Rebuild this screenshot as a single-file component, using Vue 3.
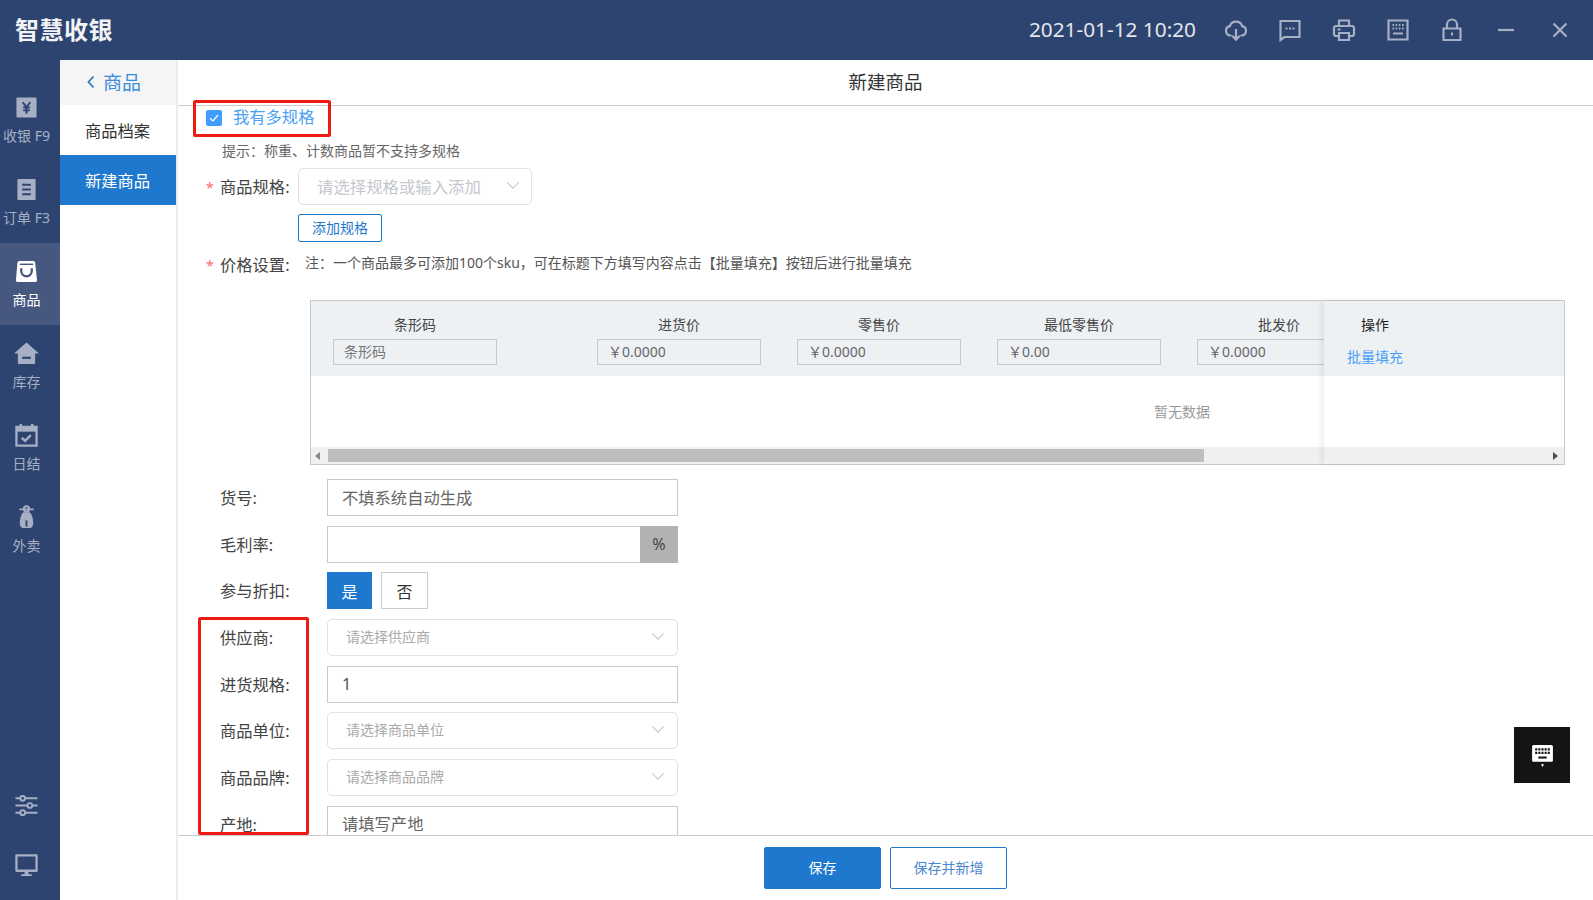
<template>
  <div class="shell">
    <header class="topbar">
      <div class="logo">智慧收银</div>
      <div class="top-right">
        <span class="clock">2021-01-12 10:20</span>
        <div class="top-icons">
          <svg viewBox="0 0 24 24"><path d="M7.500 17.500H6.500a4.700 4.700 0 0 1-.7-9.300A6.500 6.500 0 0 1 18.200 8.200a4.700 4.700 0 0 1-.7 9.300h-1" /><path d="M12 11v10.500M8.200 17.800 12 21.600l3.800-3.800" /></svg>
          <svg viewBox="0 0 24 24"><path d="M2.500 3h19v16H6.500l-4 3z" /><path d="M7.500 10.500h2M11 10.500h2M14.500 10.500h2" /></svg>
          <svg viewBox="0 0 24 24"><path d="M7 8V2.500h10V8" /><path d="M7 18H4a2 2 0 0 1-2-2V10a2 2 0 0 1 2-2h16a2 2 0 0 1 2 2v6a2 2 0 0 1-2 2h-3" /><path d="M7 15h10v7H7zM5.500 11.500h3" /></svg>
          <svg viewBox="0 0 24 24"><path d="M2.500 2.500h19v19h-19z" /><path d="M6.500 7h1.600M9.600 7h1.600M12.800 7h1.600M16 7h1.600M6.500 10.500h1.600M9.600 10.500h1.600M12.800 10.500h1.600M16 10.500h1.600M7 15.500h10" /></svg>
          <svg viewBox="0 0 24 24"><path d="M3.500 10.500h17v11.500h-17z" /><path d="M7 10.500V6.500a5 5 0 0 1 10 0v4M12 14.500v3" /></svg>
          <svg viewBox="0 0 24 24"><path d="M4 12h16" /></svg>
          <svg viewBox="0 0 24 24"><path d="M5.500 5.500l13 13M18.500 5.500l-13 13" /></svg>
        </div>
      </div>
    </header>

    <div class="layout">
      <aside class="sidebar">
        <div class="side-list">
          <div v-for="item in sideItems" :key="item.label" class="side-item" :class="{ active: item.active }">
            <svg viewBox="0 0 24 24" class="side-icon" v-html="item.icon"></svg>
            <span>{{ item.label }}</span>
          </div>
        </div>
        <div class="side-bottom">
          <svg viewBox="0 0 24 24" class="side-icon">
            <path d="M0.500 4.500h23M0.500 12h23M0.500 19.500h23" stroke="#a6afc4" stroke-width="2.200" fill="none" />
            <circle cx="8" cy="4.500" r="2.500" fill="#2d4470" stroke="#a6afc4" stroke-width="2" />
            <circle cx="15.500" cy="12" r="2.500" fill="#2d4470" stroke="#a6afc4" stroke-width="2" />
            <circle cx="8" cy="19.500" r="2.500" fill="#2d4470" stroke="#a6afc4" stroke-width="2" />
          </svg>
          <svg viewBox="0 0 24 24" class="side-icon">
            <path d="M1.500 1.500h21v16h-21z" fill="none" stroke="#a6afc4" stroke-width="2.400" stroke-linejoin="round" />
            <path d="M10 18.500h4v3h-4zM6.500 21h11v2h-11z" fill="#a6afc4" />
          </svg>
        </div>
      </aside>

      <nav class="subnav">
        <div class="sub-back">
          <svg viewBox="0 0 10 14" class="back-arrow"><path d="M7.500 1.500 2.500 7l5 5.500" /></svg>
          商品
        </div>
        <div class="sub-item">商品档案</div>
        <div class="sub-item current">新建商品</div>
      </nav>

      <main class="main">
        <div class="title">新建商品</div>
        <div class="form-area">
          <div class="multi-row">
            <span class="check-box" :class="{ off: !multiSpec }" @click="multiSpec = !multiSpec">
              <svg viewBox="0 0 16 16"><path d="M4 8.200 7 11l5-6" /></svg>
            </span>
            <span class="multi-label">我有多规格</span>
          </div>
          <div class="hint">提示：称重、计数商品暂不支持多规格</div>

          <div class="spec-row">
            <label class="field-label short"><i>*</i>商品规格:</label>
            <div class="select big">
              <span>请选择规格或输入添加</span>
              <svg viewBox="0 0 16 10" class="chev"><path d="M1.500 1.500 8 8l6.500-6.500" /></svg>
            </div>
          </div>
          <button class="add-btn">添加规格</button>

          <div class="price-row">
            <label class="field-label short"><i>*</i>价格设置:</label>
            <span class="price-note">注：一个商品最多可添加100个sku，可在标题下方填写内容点击【批量填充】按钮后进行批量填充</span>
          </div>

          <div class="table">
            <div class="table-view">
              <div class="track">
                <div class="thead">
                  <div v-for="col in columns" :key="col.title" class="col" :class="{ first: col.first }">
                    <div class="col-title">{{ col.title }}</div>
                    <input class="col-input" :class="{ 'has-holder': col.first }" :value="col.value" :placeholder="col.holder" />
                  </div>
                </div>
                <div class="empty">暂无数据</div>
              </div>
            </div>
            <div class="scrollbar">
              <span class="arrow left"></span>
              <span class="thumb"></span>
            </div>
            <div class="fixed-col">
              <div class="fixed-head">
                <div class="op-title">操作</div>
                <a class="op-link">批量填充</a>
              </div>
              <div class="fixed-body"></div>
              <div class="fixed-bar">
                <span class="arrow right"></span>
              </div>
            </div>
          </div>

          <div class="rows">
            <div class="row">
              <label class="field-label">货号:</label>
              <input class="text-input" placeholder="不填系统自动生成" />
            </div>
            <div class="row">
              <label class="field-label">毛利率:</label>
              <div class="group">
                <input class="text-input flat" />
                <span class="addon">%</span>
              </div>
            </div>
            <div class="row">
              <label class="field-label">参与折扣:</label>
              <button class="toggle" :class="{ on: discount }" @click="discount = true">是</button>
              <button class="toggle second" :class="{ on: !discount }" @click="discount = false">否</button>
            </div>
            <div class="row">
              <label class="field-label">供应商:</label>
              <div class="select">
                <span>请选择供应商</span>
                <svg viewBox="0 0 16 10" class="chev"><path d="M1.500 1.500 8 8l6.500-6.500" /></svg>
              </div>
            </div>
            <div class="row">
              <label class="field-label">进货规格:</label>
              <input class="text-input" value="1" />
            </div>
            <div class="row">
              <label class="field-label">商品单位:</label>
              <div class="select">
                <span>请选择商品单位</span>
                <svg viewBox="0 0 16 10" class="chev"><path d="M1.500 1.500 8 8l6.500-6.500" /></svg>
              </div>
            </div>
            <div class="row">
              <label class="field-label">商品品牌:</label>
              <div class="select">
                <span>请选择商品品牌</span>
                <svg viewBox="0 0 16 10" class="chev"><path d="M1.500 1.500 8 8l6.500-6.500" /></svg>
              </div>
            </div>
            <div class="row">
              <label class="field-label">产地:</label>
              <input class="text-input" placeholder="请填写产地" />
            </div>
          </div>
        </div>
        <footer class="footer">
          <button class="btn primary">保存</button>
          <button class="btn ghost">保存并新增</button>
        </footer>
      </main>
    </div>

    <!-- red marks drawn on top of the screenshot -->
    <div class="mark mark-a"></div>
    <div class="mark mark-b"></div>

    <div class="kb-float">
      <svg viewBox="0 0 24 24">
        <path d="M2 2.500a1.500 1.500 0 0 1 1.500-1.500h17A1.500 1.500 0 0 1 22 2.500v13a1.500 1.500 0 0 1-1.500 1.500h-17A1.500 1.500 0 0 1 2 15.500z" fill="#fff" />
        <path d="M5 5.200h14M5 8.500h14" stroke="#141414" stroke-width="2.200" stroke-dasharray="2 1" fill="none" />
        <path d="M8 13h8" stroke="#141414" stroke-width="2" fill="none" />
        <path d="M10.500 19.500h3L12 22z" fill="#fff" />
      </svg>
    </div>
  </div>
</template>

<script setup>
import { ref } from 'vue'

const multiSpec = ref(true)
const discount = ref(true)

const sideItems = [
  {
    label: '收银 F9',
    icon: '<path d="M1.500 2.500a1 1 0 0 1 1-1h19a1 1 0 0 1 1 1v19a1 1 0 0 1-1 1h-19a1 1 0 0 1-1-1z" fill="#a6afc4"/><path d="M8 6.500l4 5 4-5M12 11.500v7M8.500 12h7M8.500 15h7" stroke="#2d4470" stroke-width="2" fill="none"/>'
  },
  {
    label: '订单 F3',
    icon: '<path d="M2.500 2a1 1 0 0 1 1-1h17a1 1 0 0 1 1 1v20a1 1 0 0 1-1 1h-17a1 1 0 0 1-1-1z" fill="#a6afc4"/><path d="M7.500 7h9M7.500 12h9M7.500 17h9" stroke="#2d4470" stroke-width="2" fill="none"/>'
  },
  {
    label: '商品',
    active: true,
    icon: '<path d="M5 1h14a2 2 0 0 1 2 1.500L23 21a2 2 0 0 1-2 2H3a2 2 0 0 1-2-2L2.500 3A2.500 2.500 0 0 1 5 1z" fill="#fff"/><path d="M5 4.500h14" stroke="#475880" stroke-width="1.500"/><path d="M6.500 8.500v3a5.500 5.500 0 0 0 11 0v-3" stroke="#475880" stroke-width="2.400" fill="none"/>'
  },
  {
    label: '库存',
    icon: '<path d="M12 .5 25 12h-4v10a1 1 0 0 1-1 1H4a1 1 0 0 1-1-1V12H-1z" fill="#a6afc4"/><path d="M7.500 16.500h9" stroke="#2d4470" stroke-width="2.200"/>'
  },
  {
    label: '日结',
    icon: '<path d="M6 0v3M18 0v3" stroke="#a6afc4" stroke-width="2.600"/><path d="M1.500 3h21v19.500h-21z" fill="none" stroke="#a6afc4" stroke-width="2.400"/><path d="M1.500 3h21v5h-21z" fill="#a6afc4"/><path d="M7 14.500l3.500 3 6-6" stroke="#a6afc4" stroke-width="2.600" fill="none"/>'
  },
  {
    label: '外卖',
    icon: '<circle cx="12" cy="3" r="2.800" fill="none" stroke="#a6afc4" stroke-width="2"/><path d="M4.500 3.500h15" stroke="#a6afc4" stroke-width="1.800"/><path d="M8.500 6.500h7c2.500 3 3.500 7 3.500 11.500 0 3-1.500 5-3.500 5h-7C6.500 23 5 21 5 18c0-4.500 1-8.500 3.500-11.500z" fill="#a6afc4"/><path d="M12 15v6.500" stroke="#2d4470" stroke-width="2"/>'
  }
]

const columns = [
  { title: '条形码', holder: '条形码', first: true },
  { title: '进货价', value: '￥0.0000' },
  { title: '零售价', value: '￥0.0000' },
  { title: '最低零售价', value: '￥0.00' },
  { title: '批发价', value: '￥0.0000' }
]
</script>

<style>
html, body {
  margin: 0;
  height: 100%;
  background: #fff;
}
</style>

<style scoped>
* {
  box-sizing: border-box;
}

.shell {
  position: relative;
  width: 1593px;
  height: 900px;
  display: flex;
  flex-direction: column;
  overflow: hidden;
  font-family: "Noto Sans", "Noto Sans CJK SC", sans-serif;
  color: #444;
}

.topbar {
  height: 60px;
  flex-shrink: 0;
  background: #2d4470;
  display: flex;
  justify-content: space-between;
  align-items: center;
  padding: 0 21px 0 15px;
}

.logo {
  padding-bottom: 3px;
  font-size: 24px;
  font-weight: 700;
  letter-spacing: 0.5px;
  color: #f2f3f6;
}

.top-right {
  display: flex;
  align-items: center;
}

.clock {
  padding-bottom: 2px;
  font-size: 20.800px;
  color: #e3e6ec;
  margin-right: 28px;
}

.top-icons {
  display: flex;
  gap: 30px;
}

.top-icons svg {
  width: 24px;
  height: 24px;
  fill: none;
  stroke: #a6afc4;
  stroke-width: 2.200;
  overflow: visible;
}

.layout {
  flex: 1;
  display: flex;
  min-height: 0;
}

.sidebar {
  width: 60px;
  flex-shrink: 0;
  background: #2d4470;
  display: flex;
  flex-direction: column;
  justify-content: space-between;
  padding: 19px 0 18px;
}

.side-item {
  height: 82px;
  display: flex;
  flex-direction: column;
  align-items: center;
  padding: 17px 7px 0 0;
  font-size: 14px;
  line-height: 20px;
  white-space: nowrap;
  color: #a6afc4;
}

.side-item.active {
  background: #475880;
  color: #fff;
}

.side-icon {
  width: 23px;
  height: 23px;
  margin-bottom: 7px;
  overflow: visible;
  flex-shrink: 0;
}

.side-bottom {
  display: flex;
  flex-direction: column;
  align-items: center;
  gap: 30px;
  padding-right: 7px;
}

.side-bottom .side-icon:last-child {
  margin-bottom: 5px;
}

.subnav {
  width: 118px;
  flex-shrink: 0;
  border-right: 2px solid #ececec;
  font-size: 16.300px;
}

.sub-back {
  height: 45px;
  background: #f5f5f5;
  display: flex;
  align-items: center;
  padding: 0 0 1px 26px;
  font-size: 19px;
  color: #3a8ddb;
}

.back-arrow {
  width: 10px;
  height: 14px;
  margin-right: 7px;
  fill: none;
  stroke: #2f77c0;
  stroke-width: 1.800;
}

.sub-item {
  height: 50px;
  display: flex;
  align-items: center;
  padding: 0 0 1px 25px;
  color: #333;
}

.sub-item.current {
  width: 116px;
  background: #1e78cd;
  color: #fff;
}

.main {
  flex: 1;
  min-width: 0;
  display: flex;
  flex-direction: column;
}

.title {
  height: 46px;
  flex-shrink: 0;
  display: flex;
  align-items: center;
  justify-content: center;
  padding-bottom: 3px;
  font-size: 18.500px;
  color: #333;
  border-bottom: 1px solid #ccc;
}

.form-area {
  flex: 1;
  min-height: 0;
  overflow: hidden;
  padding-left: 28px;
}

.multi-row {
  height: 24px;
  display: flex;
  align-items: center;
}

.check-box {
  width: 16px;
  height: 16px;
  border-radius: 2px;
  background: #409eff;
  display: flex;
  cursor: pointer;
}

.check-box.off {
  background: #fff;
  border: 1px solid #ccc;
}

.check-box svg {
  fill: none;
  stroke: #fff;
  stroke-width: 1.200;
}

.multi-label {
  margin-left: 11px;
  padding-bottom: 5px;
  font-size: 16.300px;
  color: #4aa0f5;
}

.hint {
  margin: 10px 0 0 16px;
  padding-bottom: 1px;
  font-size: 14px;
  line-height: 22px;
  color: #666;
}

.spec-row {
  display: flex;
  align-items: center;
  margin-top: 5px;
}

.field-label {
  width: 107px;
  margin-left: 14px;
  padding-bottom: 1px;
  flex-shrink: 0;
  font-size: 16.300px;
  color: #444;
}

.field-label.short {
  width: 78px;
}

.field-label i {
  display: inline-block;
  width: 14px;
  margin-left: -14px;
  font-style: normal;
  font-size: 14px;
  color: #f56c6c;
}

.select {
  width: 351px;
  height: 37px;
  border: 1px solid #e0e2e8;
  border-radius: 5px;
  display: flex;
  align-items: center;
  justify-content: space-between;
  padding: 0 12px 3px 18px;
  font-size: 14px;
  color: #aaa;
}

.select.big {
  width: 234px;
  height: 37px;
  padding: 0 11px 2px 18px;
  font-size: 16.400px;
  color: #c4c7ce;
}

.chev {
  width: 14px;
  height: 9px;
  fill: none;
  stroke: #c4c8d2;
  stroke-width: 1.300;
}

.add-btn {
  display: block;
  width: 84px;
  height: 28px;
  margin: 9px 0 0 92px;
  padding: 0 0 2px;
  background: #fff;
  border: 1px solid #1e78cd;
  border-radius: 2px;
  font: inherit;
  font-size: 14px;
  color: #1e78cd;
}

.price-row {
  height: 24px;
  margin-top: 10px;
  display: flex;
  align-items: center;
}

.price-note {
  margin-left: 7px;
  padding-bottom: 4px;
  font-size: 14px;
  color: #555;
}

.table {
  position: relative;
  width: 1255px;
  height: 165px;
  margin: 24px 0 14px 104px;
  border: 1px solid #c9c9c9;
  display: flex;
  flex-direction: column;
}

.table-view {
  flex: 1;
  min-height: 0;
  overflow: hidden;
}

.track {
  width: 1742px;
}

.thead {
  height: 75px;
  background: #eef1f4;
  display: flex;
  padding: 13px 0 0 22px;
}

.col {
  width: 164px;
  margin-right: 36px;
  flex-shrink: 0;
}

.col.first {
  margin-right: 100px;
}

.col-title {
  height: 21px;
  font-size: 14px;
  line-height: 21px;
  text-align: center;
  color: #444;
}

.col-input {
  display: block;
  width: 164px;
  height: 26px;
  margin-top: 4px;
  padding: 0 10px 2px;
  background: transparent;
  border: 1px solid #c9c9c9;
  outline: none;
  font: inherit;
  font-size: 14px;
  color: #666;
}

.col-input.has-holder::placeholder {
  color: #777;
  opacity: 1;
}

.empty {
  height: 72px;
  display: flex;
  align-items: center;
  justify-content: center;
  padding-bottom: 2px;
  font-size: 14px;
  color: #999;
}

.scrollbar {
  height: 17px;
  flex-shrink: 0;
  background: #f0f0f0;
  display: flex;
  align-items: center;
  padding: 2px 0;
}

.arrow {
  width: 0;
  height: 0;
  border-style: solid;
  border-width: 4px;
  border-color: transparent;
}

.arrow.left {
  margin-left: 4px;
  border-left-width: 0;
  border-right: 5px solid #888;
}

.arrow.right {
  border-right-width: 0;
  border-left: 5px solid #505050;
}

.thumb {
  width: 876px;
  height: 100%;
  margin-left: 8px;
  background: #bebebe;
}

.fixed-col {
  position: absolute;
  top: 0;
  right: 0;
  bottom: 0;
  width: 240px;
  display: flex;
  flex-direction: column;
  background: #fff;
  box-shadow: -3px 0 5px rgba(0, 0, 0, 0.07);
}

.fixed-head {
  height: 75px;
  background: #eef1f4;
  padding: 13px 0 0 23px;
  font-size: 14px;
}

.op-title {
  width: 56px;
  line-height: 21px;
  text-align: center;
  color: #222;
}

.op-link {
  display: block;
  margin-top: 11px;
  line-height: 21px;
  color: #4aa0f5;
}

.fixed-body {
  flex: 1;
}

.fixed-bar {
  height: 17px;
  background: #f0f0f0;
  display: flex;
  align-items: center;
  justify-content: flex-end;
  padding-right: 6px;
}

.rows {
  display: flex;
  flex-direction: column;
  gap: 9.700px;
}

.row {
  display: flex;
  align-items: center;
  height: 37px;
}

.text-input {
  width: 351px;
  height: 37px;
  padding: 0 14px;
  border: 1px solid #c9c9c9;
  outline: none;
  font: inherit;
  font-size: 16.300px;
  color: #555;
}

.text-input::placeholder {
  color: #666;
  opacity: 1;
}

.group {
  width: 351px;
  display: flex;
}

.text-input.flat {
  flex: 1;
  min-width: 0;
  border-right: 0;
}

.addon {
  width: 38px;
  background: #b2b2b2;
  display: flex;
  align-items: center;
  justify-content: center;
  font-size: 16px;
  color: #444;
}

.toggle {
  width: 45px;
  height: 37px;
  padding: 0;
  background: #fff;
  border: 1px solid #ccc;
  font: inherit;
  font-size: 16px;
  color: #333;
}

.toggle.second {
  width: 47px;
  margin-left: 9px;
}

.toggle.on {
  background: #1e78cd;
  border-color: #1e78cd;
  color: #fff;
}

.footer {
  height: 65px;
  flex-shrink: 0;
  border-top: 1px solid #ccc;
  display: flex;
  justify-content: center;
  align-items: center;
  gap: 9px;
}

.btn {
  width: 117px;
  height: 42px;
  padding: 0 0 2px;
  border-radius: 2px;
  font: inherit;
  font-size: 14px;
}

.btn.primary {
  background: #1e78cd;
  border: 1px solid #1e78cd;
  color: #fff;
}

.btn.ghost {
  background: #fff;
  border: 1px solid #1e78cd;
  color: #4a86cf;
}

.mark {
  position: absolute;
  border: 3px solid #f01a14;
  border-radius: 2px;
  pointer-events: none;
}

.mark-a {
  left: 193px;
  top: 100px;
  width: 138px;
  height: 37px;
}

.mark-b {
  left: 198px;
  top: 617px;
  width: 111px;
  height: 218px;
}

.kb-float {
  position: absolute;
  left: 1514px;
  top: 727px;
  width: 56px;
  height: 56px;
  background: #141414;
  display: flex;
  align-items: center;
  justify-content: center;
  padding-top: 3px;
}

.kb-float svg {
  width: 25px;
  height: 25px;
}
</style>
